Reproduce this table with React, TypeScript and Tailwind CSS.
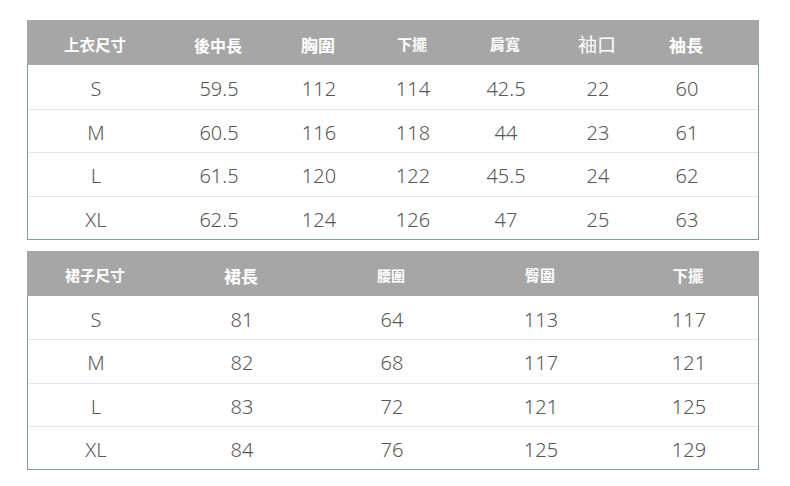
import React from "react";

const cjk = { fontFamily: '"Noto Sans CJK TC", "Noto Sans", sans-serif' };
const num = { fontFamily: '"Noto Sans", "Noto Sans CJK TC", sans-serif' };

type H = { t: string; cls: string };

const topHead: H[] = [
  { t: "上衣尺寸", cls: "text-[15.5px] font-bold" },
  { t: "後中長", cls: "text-[16px] font-bold" },
  { t: "胸圍", cls: "text-[17px] font-bold" },
  { t: "下擺", cls: "text-[15px] font-bold" },
  { t: "肩寬", cls: "text-[15px] font-bold" },
  { t: "袖口", cls: "text-[19px] font-normal" },
  { t: "袖長", cls: "text-[17px] font-bold" },
];
const topRows = [
  ["S", "59.5", "112", "114", "42.5", "22", "60"],
  ["M", "60.5", "116", "118", "44", "23", "61"],
  ["L", "61.5", "120", "122", "45.5", "24", "62"],
  ["XL", "62.5", "124", "126", "47", "25", "63"],
];
const botHead: H[] = [
  { t: "裙子尺寸", cls: "text-[15px] font-bold" },
  { t: "裙長", cls: "text-[17px] font-bold" },
  { t: "腰圍", cls: "text-[14px] font-bold" },
  { t: "臀圍", cls: "text-[15px] font-bold" },
  { t: "下擺", cls: "text-[15.5px] font-bold" },
];
const botRows = [
  ["S", "81", "64", "113", "117"],
  ["M", "82", "68", "117", "121"],
  ["L", "83", "72", "121", "125"],
  ["XL", "84", "76", "125", "129"],
];

function Table({
  head,
  rows,
  grid,
  rowH,
  lastPad,
}: {
  head: H[];
  rows: string[][];
  grid: string;
  rowH: string;
  lastPad: string;
}) {
  return (
    <div className="w-[732px]">
      <div className={`grid ${grid} h-[45px] bg-[#a6a6a6] items-center ${lastPad}`}>
        {head.map((h, i) => (
          <div key={i} className={`text-center text-white pt-[4px] ${h.cls}`} style={cjk}>
            {h.t}
          </div>
        ))}
      </div>
      <div className="border-x border-b border-[#7d9f9f] bg-white">
        {rows.map((r, ri) => (
          <div
            key={ri}
            className={`grid ${grid} ${rowH} items-center ${lastPad} ${ri > 0 ? "border-t border-[#e4e4e4]" : ""}`}
          >
            {r.map((c, ci) => (
              <div key={ci} className="text-center text-[20px] text-[#585858] font-light leading-none pt-[4px]" style={num}>
                {c}
              </div>
            ))}
          </div>
        ))}
      </div>
    </div>
  );
}

export default function App() {
  return (
    <div className="w-[790px] h-[486px] bg-white pt-[20px] pl-[27px] flex flex-col gap-[11px]">
      <Table
        head={topHead}
        rows={topRows}
        grid="grid-cols-[136px_110px_90px_98px_88px_96px_82px]"
        rowH="h-[43.5px]"
        lastPad="pr-[32px]"
      />
      <Table
        head={botHead}
        rows={botRows}
        grid="grid-cols-[136px_156px_144px_154px_142px]"
        rowH="h-[43.25px]"
        lastPad=""
      />
    </div>
  );
}
